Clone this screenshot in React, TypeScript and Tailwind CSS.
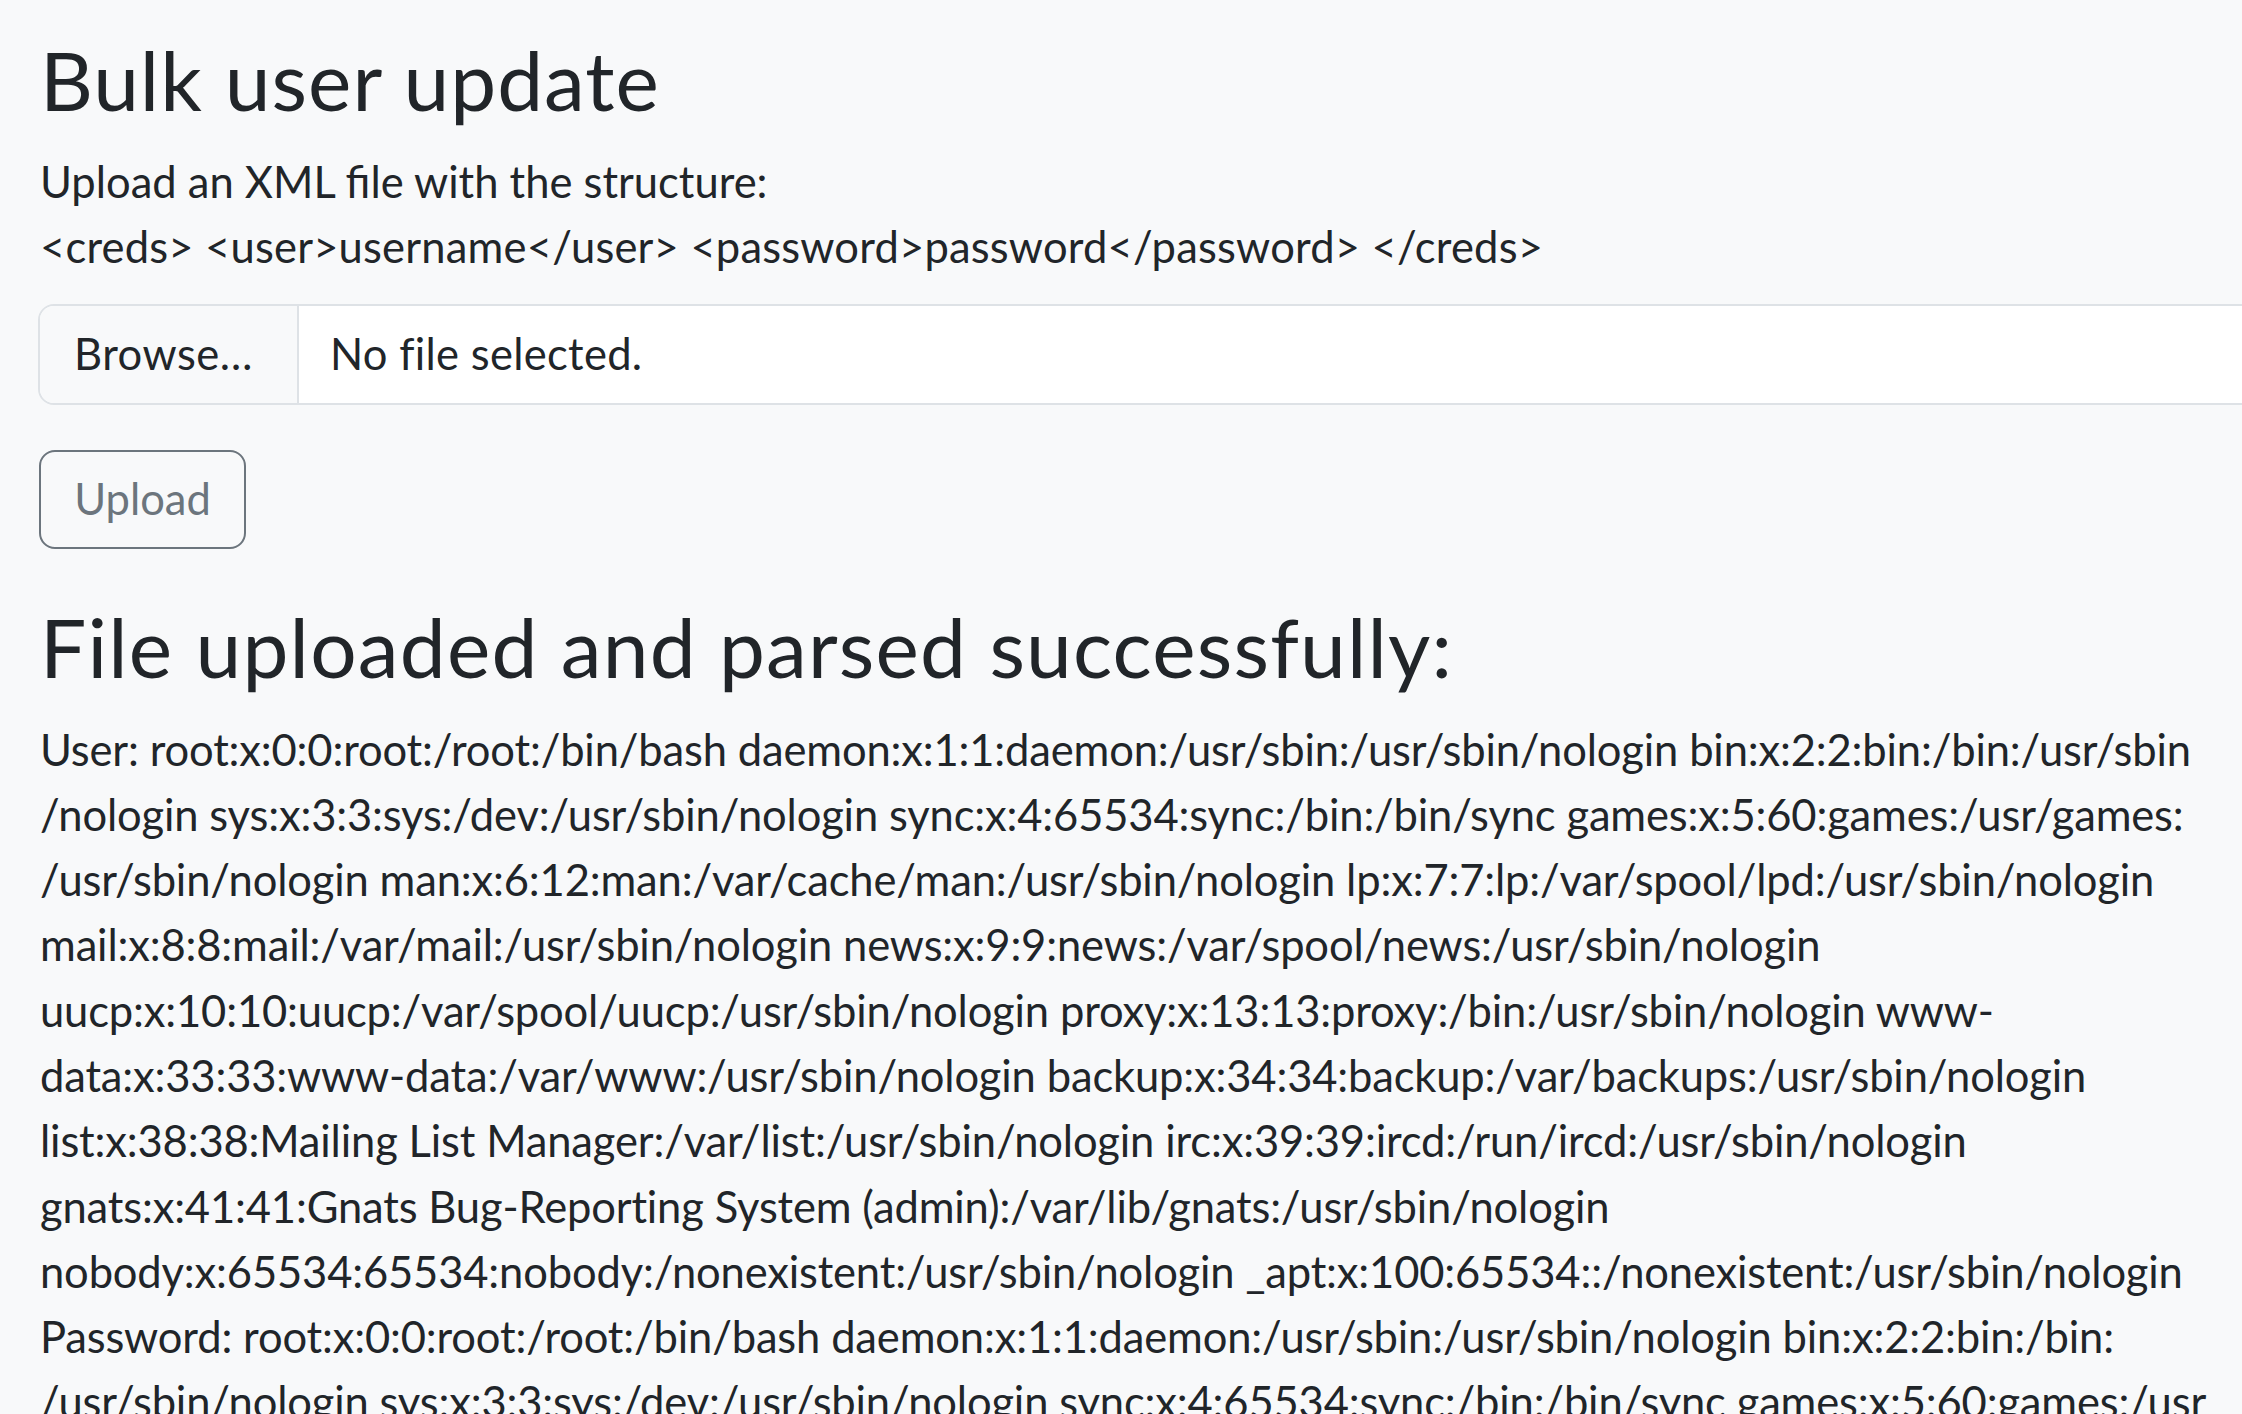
import React from "react";

const lines = [
  "User: root:x:0:0:root:/root:/bin/bash daemon:x:1:1:daemon:/usr/sbin:/usr/sbin/nologin bin:x:2:2:bin:/bin:/usr/sbin",
  "/nologin sys:x:3:3:sys:/dev:/usr/sbin/nologin sync:x:4:65534:sync:/bin:/bin/sync games:x:5:60:games:/usr/games:",
  "/usr/sbin/nologin man:x:6:12:man:/var/cache/man:/usr/sbin/nologin lp:x:7:7:lp:/var/spool/lpd:/usr/sbin/nologin",
  "mail:x:8:8:mail:/var/mail:/usr/sbin/nologin news:x:9:9:news:/var/spool/news:/usr/sbin/nologin",
  "uucp:x:10:10:uucp:/var/spool/uucp:/usr/sbin/nologin proxy:x:13:13:proxy:/bin:/usr/sbin/nologin www-",
  "data:x:33:33:www-data:/var/www:/usr/sbin/nologin backup:x:34:34:backup:/var/backups:/usr/sbin/nologin",
  "list:x:38:38:Mailing List Manager:/var/list:/usr/sbin/nologin irc:x:39:39:ircd:/run/ircd:/usr/sbin/nologin",
  "gnats:x:41:41:Gnats Bug-Reporting System (admin):/var/lib/gnats:/usr/sbin/nologin",
  "nobody:x:65534:65534:nobody:/nonexistent:/usr/sbin/nologin _apt:x:100:65534::/nonexistent:/usr/sbin/nologin",
  "Password: root:x:0:0:root:/root:/bin/bash daemon:x:1:1:daemon:/usr/sbin:/usr/sbin/nologin bin:x:2:2:bin:/bin:",
  "/usr/sbin/nologin sys:x:3:3:sys:/dev:/usr/sbin/nologin sync:x:4:65534:sync:/bin:/bin/sync games:x:5:60:games:/usr",
];

export default function App() {
  return (
    <div className="w-[2242px] h-[1414px] overflow-hidden bg-[#f8f9fa] text-[#212529] font-['Lato','Liberation_Sans',sans-serif]">
      <div className="pl-[40px] pt-[30px]">
        <h1 className="text-[82px] leading-[98px] font-normal tracking-[1px] mb-[21px]">Bulk user update</h1>
        <div className="text-[43.5px] leading-[65.25px]">
          <div>Upload an XML file with the structure:</div>
          <div className="whitespace-nowrap tracking-[0.2px]">{"<creds> <user>username</user> <password>password</password> </creds>"}</div>
        </div>
        <div className="mt-[24px] -ml-[2px] flex h-[101px] w-[2260px] overflow-hidden rounded-l-[16px] border-2 border-[#dee2e6] bg-white text-[43.5px]">
          <div className="flex w-[259px] shrink-0 items-center border-r-2 border-[#dee2e6] bg-[#f8f9fa] pl-[34px] tracking-[0.5px]">Browse…</div>
          <div className="flex items-center pl-[31px] tracking-[0.3px]">No file selected.</div>
        </div>
        <button className="mt-[45px] -ml-[1px] flex h-[99px] w-[207px] items-center justify-center rounded-[16px] border-2 border-[#6c757d] text-[43.5px] text-[#6c757d]">
          Upload
        </button>
        <h2 className="mt-[48px] text-[82px] leading-[98px] font-normal tracking-[1.2px]">File uploaded and parsed successfully:</h2>
        <div className="mt-[22px] text-[43.5px] leading-[65.3px] tracking-[-0.15px]">
          {lines.map((l, i) => (
            <div key={i} className="whitespace-nowrap">{l}</div>
          ))}
        </div>
      </div>
    </div>
  );
}
